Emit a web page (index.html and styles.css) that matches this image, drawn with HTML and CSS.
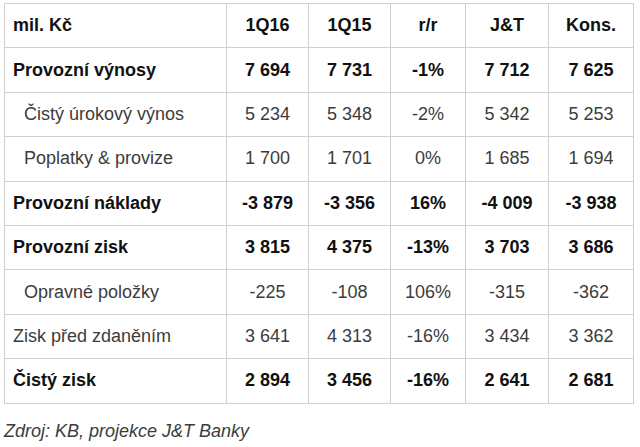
FILE: index.html
```html
<!DOCTYPE html>
<html lang="cs">
<head>
<meta charset="utf-8">
<title>Výsledky KB 1Q16</title>
<link rel="stylesheet" href="styles.css">
</head>
<body>
<div class="page">
  <table class="results">
    <colgroup>
      <col class="c-label">
      <col class="c-num">
      <col class="c-num">
      <col class="c-rr">
      <col class="c-jt">
      <col class="c-kons">
    </colgroup>
    <tr class="bold">
      <td class="label">mil. Kč</td><td>1Q16</td><td>1Q15</td><td>r/r</td><td>J&amp;T</td><td>Kons.</td>
    </tr>
    <tr class="bold">
      <td class="label">Provozní výnosy</td><td>7 694</td><td>7 731</td><td>-1%</td><td>7 712</td><td>7 625</td>
    </tr>
    <tr>
      <td class="label indent">Čistý úrokový výnos</td><td>5 234</td><td>5 348</td><td>-2%</td><td>5 342</td><td>5 253</td>
    </tr>
    <tr>
      <td class="label indent">Poplatky &amp; provize</td><td>1 700</td><td>1 701</td><td>0%</td><td>1 685</td><td>1 694</td>
    </tr>
    <tr class="bold">
      <td class="label">Provozní náklady</td><td>-3 879</td><td>-3 356</td><td>16%</td><td>-4 009</td><td>-3 938</td>
    </tr>
    <tr class="bold">
      <td class="label">Provozní zisk</td><td>3 815</td><td>4 375</td><td>-13%</td><td>3 703</td><td>3 686</td>
    </tr>
    <tr>
      <td class="label indent">Opravné položky</td><td>-225</td><td>-108</td><td>106%</td><td>-315</td><td>-362</td>
    </tr>
    <tr>
      <td class="label">Zisk před zdaněním</td><td>3 641</td><td>4 313</td><td>-16%</td><td>3 434</td><td>3 362</td>
    </tr>
    <tr class="bold">
      <td class="label">Čistý zisk</td><td>2 894</td><td>3 456</td><td>-16%</td><td>2 641</td><td>2 681</td>
    </tr>
  </table>
  <p class="source">Zdroj: KB, projekce J&amp;T Banky</p>
</div>
</body>
</html>
```

FILE: styles.css
```css
html, body {
  margin: 0;
  padding: 0;
  background: #ffffff;
}

.page {
  padding: 3px 0 0 4px;
  font-family: "Liberation Sans", Arial, sans-serif;
  font-size: 18px;
  color: #3c3c3c;
}

.results {
  border-collapse: collapse;
  table-layout: fixed;
  width: 629px;
}

.c-label { width: 222px; }
.c-num { width: 82px; }
.c-rr { width: 75px; }
.c-jt { width: 83px; }
.c-kons { width: 85px; }

.results td {
  border: 1px solid #cfcfcf;
  height: 43.4px;
  padding: 0;
  text-align: center;
  vertical-align: middle;
  white-space: nowrap;
}

.results td.label {
  text-align: left;
  padding-left: 8px;
}

.results td.indent {
  padding-left: 19px;
}

.results tr.bold td {
  font-weight: bold;
  color: #111111;
}

.source {
  margin: 17px 0 0 0;
  font-style: italic;
  color: #3c3c3c;
}
```
